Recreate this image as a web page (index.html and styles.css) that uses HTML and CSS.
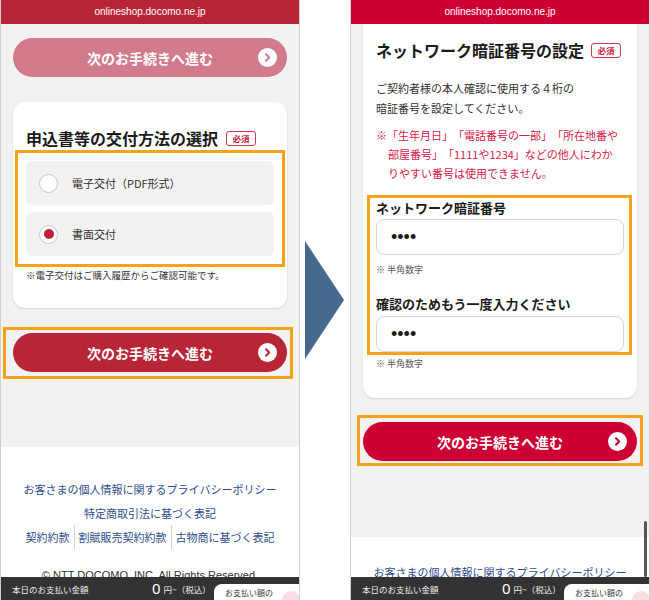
FILE: index.html
```html
<!DOCTYPE html>
<html lang="ja">
<head>
    <meta charset="UTF-8">
    <meta name="viewport" content="width=device-width, initial-scale=1.0">
    <title>お手続きの流れ</title>
    <link rel="stylesheet" href="styles.css">
</head>
<body>
    <div class="shot">

        <!-- left screen: delivery method -->
        <div class="phone">
            <div class="urlbar">onlineshop.docomo.ne.jp</div>
            <div class="main main-left">
                <button type="button" class="next faded">
                    <span class="next-label">次のお手続きへ進む</span>
                    <span class="chev"><svg width="19" height="19" viewBox="0 0 19 19"><path d="M8 6.2l3.2 3.3L8 12.8" fill="none" stroke="#d17b8c" stroke-width="2" stroke-linecap="round" stroke-linejoin="round"/></svg></span>
                </button>

                <section class="card">
                    <h2 class="card-title">申込書等の交付方法の選択<span class="req">必須</span></h2>
                    <div class="options">
                        <label class="option"><input type="radio" name="deliver" class="radio">電子交付（PDF形式）</label>
                        <label class="option"><input type="radio" name="deliver" class="radio" checked>書面交付</label>
                    </div>
                    <p class="note">※電子交付はご購入履歴からご確認可能です。</p>
                </section>

                <div class="btn-mark">
                    <button type="button" class="next">
                        <span class="next-label">次のお手続きへ進む</span>
                        <span class="chev"><svg width="19" height="19" viewBox="0 0 19 19"><path d="M8 6.2l3.2 3.3L8 12.8" fill="none" stroke="#b82537" stroke-width="2" stroke-linecap="round" stroke-linejoin="round"/></svg></span>
                    </button>
                </div>
            </div>

            <footer class="site-foot">
                <a href="#">お客さまの個人情報に関するプライバシーポリシー</a>
                <a href="#">特定商取引法に基づく表記</a>
                <div class="foot-row">
                    <a href="#">契約約款</a><a href="#">割賦販売契約約款</a><a href="#">古物商に基づく表記</a>
                </div>
                <p class="copy">© NTT DOCOMO, INC. All Rights Reserved.</p>
            </footer>

            <div class="paybar">
                <span class="pay-label">本日のお支払い金額</span>
                <span class="pay-num">0</span>
                <span class="pay-unit">円~（税込）</span>
                <span class="pay-tab"><span class="pay-tab-text">お支払い額の</span><i class="pay-dot"></i></span>
            </div>
        </div>

        <div class="arrow">
            <svg width="39" height="118" viewBox="0 0 39 118"><polygon points="0,0 39,59 0,118" fill="#46698e"/></svg>
        </div>

        <!-- right screen: network PIN -->
        <div class="phone phone-right">
            <div class="urlbar">onlineshop.docomo.ne.jp</div>
            <div class="main main-right">
                <section class="card card-cut">
                    <h2 class="card-title">ネットワーク暗証番号の設定<span class="req">必須</span></h2>
                    <p class="lead">ご契約者様の本人確認に使用する４桁の<br>暗証番号を設定してください。</p>
                    <p class="warn">※「生年月日」「電話番号の一部」「所在地番や<br>部屋番号」「1111や1234」などの他人にわか<br>りやすい番号は使用できません。</p>

                    <div class="pin-box">
                        <label class="pin-label" for="pin1">ネットワーク暗証番号</label>
                        <input class="pin-input" type="password" id="pin1" value="1234" readonly>
                        <p class="hint">※ 半角数字</p>
                        <label class="pin-label pin-label2" for="pin2">確認のためもう一度入力ください</label>
                        <input class="pin-input pin-input2" type="password" id="pin2" value="1234" readonly>
                    </div>
                    <p class="hint hint2">※ 半角数字</p>
                </section>

                <div class="btn-mark btn-mark-right">
                    <button type="button" class="next">
                        <span class="next-label">次のお手続きへ進む</span>
                        <span class="chev"><svg width="19" height="19" viewBox="0 0 19 19"><path d="M8 6.2l3.2 3.3L8 12.8" fill="none" stroke="#cc0033" stroke-width="2" stroke-linecap="round" stroke-linejoin="round"/></svg></span>
                    </button>
                </div>
            </div>

            <footer class="site-foot site-foot-right">
                <a href="#">お客さまの個人情報に関するプライバシーポリシー</a>
                <a href="#">特定商取引法に基づく表記</a>
            </footer>

            <div class="scroll-thumb"></div>

            <div class="paybar">
                <span class="pay-label">本日のお支払い金額</span>
                <span class="pay-num">0</span>
                <span class="pay-unit">円~（税込）</span>
                <span class="pay-tab"><span class="pay-tab-text">お支払い額の</span><i class="pay-dot"></i></span>
            </div>
        </div>

    </div>
</body>
</html>
```

FILE: styles.css
```css
* {
    box-sizing: border-box;
}

body {
    margin: 0;
    background: #fff;
    font-family: "Noto Sans CJK JP", "Noto Sans", sans-serif;
    color: #333;
}

.shot {
    display: flex;
    width: 650px;
    height: 600px;
}

.phone {
    position: relative;
    display: flex;
    flex-direction: column;
    width: 300px;
    height: 600px;
    overflow: hidden;
    background: #f2f2f2;
    border-left: 1px solid #cfcfcf;
    border-right: 1px solid #cfcfcf;
}

.urlbar {
    flex: none;
    height: 24px;
    background: #b82537;
    color: #fff;
    font: 10px/24px "Liberation Sans", Arial, sans-serif;
    text-align: center;
}

.phone-right .urlbar {
    background: #cc0033;
}

.main {
    flex: none;
    padding: 0 12px;
}

.main-left {
    padding-top: 14px;
    padding-bottom: 68px;
}

.main-right {
    padding-bottom: 71px;
}

/* red pill button */
.next {
    display: grid;
    grid-template-columns: 1fr auto 1fr;
    align-items: center;
    width: 100%;
    height: 39px;
    padding: 0 10px;
    border: none;
    border-radius: 20px;
    background: #b82537;
    color: #fff;
    font: bold 14px/1 "Noto Sans CJK JP", sans-serif;
    cursor: pointer;
}

.next-label {
    grid-column: 2;
}

.chev {
    grid-column: 3;
    justify-self: end;
    display: flex;
    width: 19px;
    height: 19px;
    border-radius: 50%;
    background: #fff;
}

.faded {
    margin-bottom: 25px;
    background: #d17b8c;
}

.phone-right .next {
    background: #cc0033;
}

.btn-mark {
    margin: 19px -6px 0 -10px;
    padding: 3px 3px 4px 7px;
    border: 3px solid #f7a319;
}

.btn-mark-right {
    margin: 17px -6px 0 -6px;
    padding: 4px 3px 2px 3px;
}

/* white card */
.card {
    padding: 25px 13px 26px;
    background: #fff;
    border-radius: 12px;
    box-shadow: 0 1px 2px rgba(0, 0, 0, 0.13);
}

.card-cut {
    padding: 15px 13px 27px;
    border-radius: 0 0 12px 12px;
}

.card-title {
    display: flex;
    align-items: center;
    gap: 8px;
    margin: 0;
    font-size: 16px;
    line-height: 22px;
    font-weight: bold;
    color: #1a1a1a;
}

.phone-right .card-title {
    gap: 7px;
}

.req {
    display: inline-flex;
    align-items: center;
    justify-content: center;
    width: 30px;
    height: 15px;
    border: 1px solid #d3344f;
    border-radius: 3px;
    color: #c8203c;
    font-size: 8.5px;
    font-weight: bold;
}

.options {
    display: flex;
    flex-direction: column;
    gap: 7px;
    margin-top: 12px;
    outline: 3px solid #f7a319;
    outline-offset: 8px;
}

.option {
    display: flex;
    align-items: center;
    gap: 14px;
    height: 44px;
    padding-left: 13px;
    background: #f2f2f2;
    border-radius: 6px;
    font-size: 11px;
    color: #333;
}

.radio {
    appearance: none;
    display: grid;
    place-content: center;
    width: 19px;
    height: 19px;
    margin: 0;
    border: 1px solid #c9c9c9;
    border-radius: 50%;
    background: #fff;
}

.radio:checked::before {
    content: "";
    width: 10px;
    height: 10px;
    border-radius: 50%;
    background: #c0213a;
}

.note {
    margin: 12px 0 0;
    font-size: 9.5px;
    line-height: 14px;
}

/* pin form */
.lead {
    margin: 17px 0 0;
    font-size: 11px;
    line-height: 20px;
    color: #333;
}

.warn {
    margin: 8px 0 0;
    padding-left: 12px;
    text-indent: -12px;
    font-size: 11px;
    line-height: 19px;
    color: #d6204a;
    text-spacing-trim: space-all;
}

.pin-box {
    margin: 12px -8px 0 -9px;
    padding: 1px 5px 0 6px;
    border: 3px solid #f7a319;
}

.pin-label {
    display: block;
    font-size: 13px;
    line-height: 18px;
    font-weight: bold;
    color: #1a1a1a;
}

.pin-label2 {
    margin-top: 18px;
}

.pin-input {
    display: block;
    width: 100%;
    height: 36px;
    margin-top: 2px;
    padding: 0 14px;
    border: 1px solid #d6d6d6;
    border-radius: 8px;
    background: #fff;
    font: 18px "Liberation Sans", Arial, sans-serif;
    color: #1a1a1a;
    outline: none;
}

.pin-input2 {
    margin-top: 3px;
}

.hint {
    margin: 8px 0 0;
    font-size: 9px;
    line-height: 14px;
    color: #555;
}

.hint2 {
    margin-top: 2px;
}

/* footer links */
.site-foot {
    flex: 1;
    display: flex;
    flex-direction: column;
    align-items: center;
    padding-top: 30px;
    background: #fff;
    font-size: 11px;
    line-height: 24px;
}

.site-foot-right {
    padding-top: 23px;
}

.site-foot a {
    color: #2f4d8b;
    text-decoration: none;
}

.foot-row {
    display: flex;
}

.foot-row a {
    padding: 0 4px;
}

.foot-row a + a {
    border-left: 1px solid #d0d0d0;
}

.copy {
    margin: 18px 0 0;
    font: 11px/16px "Liberation Sans", Arial, sans-serif;
    color: #333;
}

/* fixed bottom bar */
.paybar {
    position: absolute;
    left: 0;
    right: 0;
    bottom: 0;
    display: flex;
    align-items: center;
    height: 23px;
    background: #333;
    color: #eee;
}

.paybar > span {
    flex: none;
}

.pay-label {
    width: 151px;
    padding-left: 11px;
    font-size: 8.5px;
}

.pay-num {
    font: 15px/1 "Noto Sans", sans-serif;
    color: #fff;
}

.pay-unit {
    margin-left: 3px;
    font-size: 8.5px;
}

.pay-tab {
    align-self: flex-end;
    display: flex;
    gap: 9px;
    width: 85px;
    height: 16px;
    margin-left: auto;
    padding-left: 11px;
    background: #fff;
    border-radius: 8px 0 0 0;
    color: #333;
    overflow: hidden;
}

.pay-tab-text {
    flex: none;
    font-size: 8px;
    line-height: 17px;
}

.pay-dot {
    flex: none;
    width: 18px;
    height: 18px;
    margin-top: 7px;
    border-radius: 50%;
    background: #fbdde3;
}

.scroll-thumb {
    position: absolute;
    right: 2px;
    top: 521px;
    width: 3px;
    height: 56px;
    border-radius: 2px;
    background: #555;
}

/* arrow between screens */
.arrow {
    display: flex;
    align-items: center;
    width: 50px;
    padding-left: 5px;
}

.arrow svg {
    display: block;
}
```
